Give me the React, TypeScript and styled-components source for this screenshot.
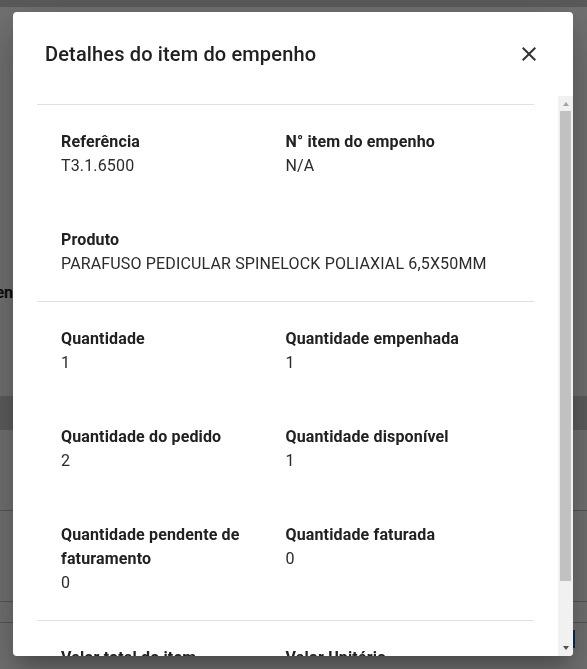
import React, { useLayoutEffect, useRef, useState } from "react";
import styled, { createGlobalStyle } from "styled-components";

interface Field {
  label: string;
  value: string;
  wide?: boolean;
}

const sections: Field[][] = [
  [
    { label: "Referência", value: "T3.1.6500" },
    { label: "N° item do empenho", value: "N/A" },
    { label: "Produto", value: "PARAFUSO PEDICULAR SPINELOCK POLIAXIAL 6,5X50MM", wide: true },
  ],
  [
    { label: "Quantidade", value: "1" },
    { label: "Quantidade empenhada", value: "1" },
    { label: "Quantidade do pedido", value: "2" },
    { label: "Quantidade disponível", value: "1" },
    { label: "Quantidade pendente de faturamento", value: "0" },
    { label: "Quantidade faturada", value: "0" },
  ],
  [
    { label: "Valor total do item", value: "R$ 0,00" },
    { label: "Valor Unitário", value: "R$ 0,00" },
  ],
];

const ARROW_SIZE = 15;

const GlobalStyle = createGlobalStyle`
  html, body {
    margin: 0;
    height: 100%;
    background: #ffffff;
    font-family: Roboto, "Liberation Sans", Arial, sans-serif;
  }
  #root {
    height: 100%;
  }
`;

export default function App() {
  const scrollRef = useRef<HTMLDivElement>(null);
  const [thumb, setThumb] = useState({ top: 0, height: 0, atTop: true, atBottom: false });

  function measure() {
    const el = scrollRef.current;
    if (!el) return;
    const track = el.clientHeight - ARROW_SIZE * 2;
    const ratio = el.clientHeight / el.scrollHeight;
    const height = Math.max(20, Math.round(track * ratio));
    const maxScroll = el.scrollHeight - el.clientHeight;
    const top = maxScroll > 0 ? Math.round((el.scrollTop / maxScroll) * (track - height)) : 0;
    setThumb({ top, height, atTop: el.scrollTop <= 0, atBottom: el.scrollTop >= maxScroll - 1 });
  }

  useLayoutEffect(() => {
    measure();
    window.addEventListener("resize", measure);
    return () => window.removeEventListener("resize", measure);
  }, []);

  return (
    <>
      <GlobalStyle />
      <UIPage>
        <UIPageTop />
        <UIPageHeading>
          <span>Itens do empenho</span>
        </UIPageHeading>
        <UITableHead />
        <UITableRow $height={80} />
        <UITableRow $height={90} />
        <UITableRow $height={20}>
          <UIPageButton />
        </UITableRow>
      </UIPage>

      <UIBackdrop>
        <UIDialog role="dialog" aria-labelledby="dialog-title">
          <UIHeader>
            <UITitle id="dialog-title">Detalhes do item do empenho</UITitle>
            <UICloseButton aria-label="Fechar">
              <svg width="24" height="24" viewBox="0 0 24 24" aria-hidden="true">
                <path
                  fill="currentColor"
                  d="M19 6.41 17.59 5 12 10.59 6.41 5 5 6.41 10.59 12 5 17.59 6.41 19 12 13.41 17.59 19 19 17.59 13.41 12z"
                />
              </svg>
            </UICloseButton>
          </UIHeader>

          <UIBodyRow>
            <UIBody ref={scrollRef} onScroll={measure}>
              {sections.map((fields, index) => (
                <UISection key={index}>
                  {fields.map((field) => (
                    <UIField key={field.label} $wide={field.wide}>
                      <UILabel>{field.label}</UILabel>
                      <UIValue>{field.value}</UIValue>
                    </UIField>
                  ))}
                </UISection>
              ))}
            </UIBody>

            <UIScrollbar aria-hidden="true">
              <UIArrow $dir="up" $active={!thumb.atTop} />
              <UITrack>
                <UIThumb style={{ marginTop: thumb.top, height: thumb.height }} />
              </UITrack>
              <UIArrow $dir="down" $active={!thumb.atBottom} />
            </UIScrollbar>
          </UIBodyRow>
        </UIDialog>
      </UIBackdrop>
    </>
  );
}

// Page behind the dialog, mostly hidden by it

const UIPage = styled.div`
  display: flex;
  flex-direction: column;
  height: 100%;
  overflow: hidden;
`;

const UIPageTop = styled.div`
  height: 7px;
  background: #cdcdcd;
  flex-shrink: 0;
`;

const UIPageHeading = styled.div`
  width: 31px;
  margin-top: 276px;
  height: 24px;
  display: flex;
  justify-content: flex-end;
  overflow: hidden;
  white-space: nowrap;
  font-size: 16px;
  font-weight: 700;
  color: #212121;
`;

const UITableHead = styled.div`
  margin-top: 89px;
  height: 34px;
  background: #d2d2d2;
  flex-shrink: 0;
`;

const UITableRow = styled.div<{ $height: number }>`
  height: ${(p) => p.$height}px;
  border-bottom: 1px solid #c4c4c4;
  flex-shrink: 0;
  display: flex;
  justify-content: flex-end;
  align-items: flex-end;
  padding-right: 12px;
`;

const UIPageButton = styled.div`
  width: 3px;
  height: 18px;
  margin-bottom: -26px;
  background: #1f5fbf;
`;

// Dialog

const UIBackdrop = styled.div`
  position: fixed;
  inset: 0;
  box-sizing: border-box;
  padding: 12px 14px 13px 13px;
  background: rgba(0, 0, 0, 0.56);
  display: flex;
`;

const UIDialog = styled.div`
  flex: 1;
  min-width: 0;
  background: #ffffff;
  border-radius: 4px;
  box-shadow: 0 11px 15px -7px rgba(0, 0, 0, 0.2), 0 24px 38px 3px rgba(0, 0, 0, 0.14),
    0 9px 46px 8px rgba(0, 0, 0, 0.12);
  display: flex;
  flex-direction: column;
  overflow: hidden;
`;

const UIHeader = styled.div`
  display: flex;
  align-items: center;
  justify-content: space-between;
  padding: 26px 32px;
  flex-shrink: 0;
`;

const UITitle = styled.h2`
  margin: 0;
  font-size: 20px;
  line-height: 32px;
  font-weight: 500;
  letter-spacing: 0.15px;
  color: #212121;
`;

const UICloseButton = styled.button`
  width: 24px;
  height: 24px;
  padding: 0;
  border: none;
  background: none;
  color: #333333;
  cursor: pointer;
  display: flex;
  align-items: center;
  justify-content: center;
`;

const UIBodyRow = styled.div`
  flex: 1;
  min-height: 0;
  display: flex;
`;

const UIBody = styled.div`
  flex: 1;
  min-width: 0;
  overflow-y: auto;
  padding: 8px 24px;
  scrollbar-width: none;

  &::-webkit-scrollbar {
    display: none;
  }
`;

const UIScrollbar = styled.div`
  width: ${ARROW_SIZE}px;
  flex-shrink: 0;
  display: flex;
  flex-direction: column;
  background: #f1f1f1;
`;

const UITrack = styled.div`
  flex: 1;
  min-height: 0;
  padding: 0 2px;
`;

const UIThumb = styled.div`
  background: #c1c1c1;
`;

const UIArrow = styled.div<{ $dir: "up" | "down"; $active: boolean }>`
  height: ${ARROW_SIZE}px;
  flex-shrink: 0;
  display: flex;
  justify-content: center;
  align-items: ${(p) => (p.$dir === "up" ? "flex-start" : "flex-end")};
  padding: ${(p) => (p.$dir === "up" ? "6px 0 0" : "0 0 6px")};
  box-sizing: border-box;

  &::before {
    content: "";
    width: 0;
    height: 0;
    border-left: 3.5px solid transparent;
    border-right: 3.5px solid transparent;
    ${(p) => (p.$dir === "up" ? "border-bottom" : "border-top")}: 4px solid
      ${(p) => (p.$active ? "#505050" : "#a3a3a3")};
  }
`;

const UISection = styled.div`
  display: grid;
  grid-template-columns: 1fr 1fr;
  row-gap: 48px;
  padding: 25px 24px 23px;
  border-top: 1px solid #e0e0e0;
`;

const UIField = styled.div<{ $wide?: boolean }>`
  grid-column: ${(p) => (p.$wide ? "1 / -1" : "auto")};
  display: flex;
  flex-direction: column;
  padding-right: 16px;
`;

const UILabel = styled.div`
  font-size: 16px;
  line-height: 24px;
  font-weight: 700;
  letter-spacing: 0.15px;
  color: #212121;
`;

const UIValue = styled.div`
  font-size: 16px;
  line-height: 24px;
  margin-bottom: 2px;
  font-weight: 400;
  letter-spacing: 0.15px;
  color: #2b2b2b;
`;
